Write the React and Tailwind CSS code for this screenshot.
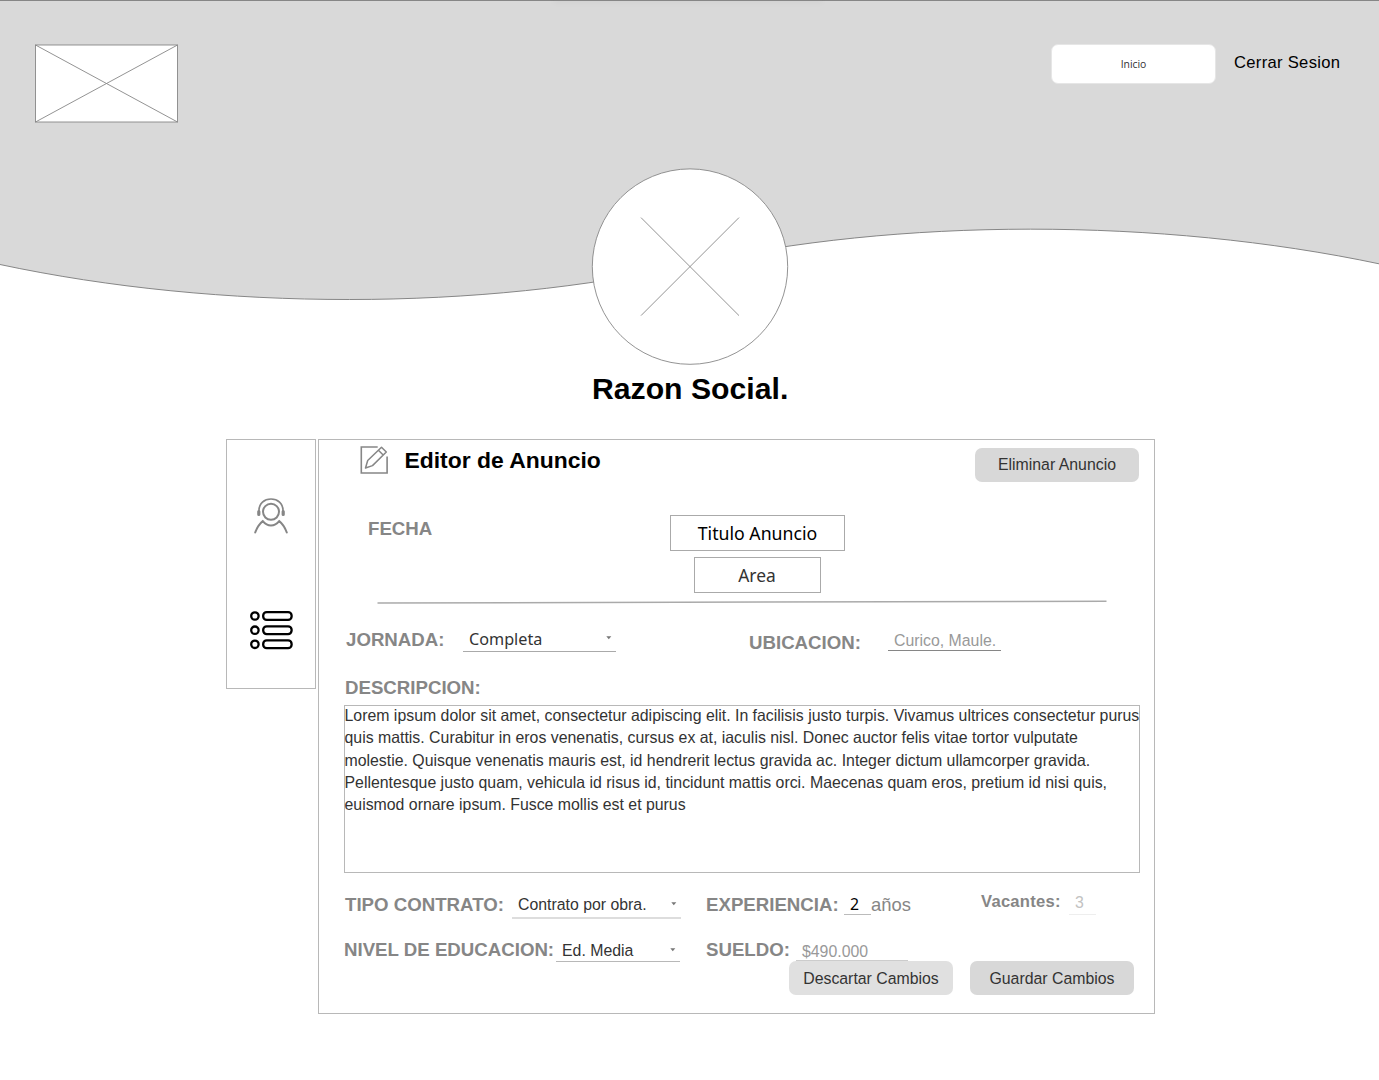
import React from "react";

const LOREM = [
  "Lorem ipsum dolor sit amet, consectetur adipiscing elit. In facilisis justo turpis. Vivamus ultrices consectetur purus",
  "quis mattis. Curabitur in eros venenatis, cursus ex at, iaculis nisl. Donec auctor felis vitae tortor vulputate",
  "molestie. Quisque venenatis mauris est, id hendrerit lectus gravida ac. Integer dictum ullamcorper gravida.",
  "Pellentesque justo quam, vehicula id risus id, tincidunt mattis orci. Maecenas quam eros, pretium id nisi quis,",
  "euismod ornare ipsum. Fusce mollis est et purus",
];

function Label({ className = "", children }) {
  return (
    <span className={`block shrink-0 whitespace-nowrap text-[18.67px] font-bold leading-[22px] text-[#868686] ${className}`}>
      {children}
    </span>
  );
}

function Button({ className = "", children }) {
  return (
    <button className={`block h-[34px] w-[164px] shrink-0 whitespace-nowrap rounded-[7px] text-center text-[15.85px] text-[#333] ${className}`}>
      {children}
    </button>
  );
}

function Field({ className = "", children }) {
  return <div className={`flex shrink-0 items-start whitespace-nowrap border-b text-[15.85px] leading-[22px] ${className}`}>{children}</div>;
}

function Caret({ className = "" }) {
  return (
    <svg className={`ml-auto shrink-0 ${className}`} width="6" height="4" viewBox="0 0 6 4">
      <path d="M0.3 0.3h5L2.8 3.3z" fill="#777" />
    </svg>
  );
}

function Logo() {
  return (
    <svg className="ml-[35px] mt-11" width="143" height="79" viewBox="0 0 143 79">
      <rect x="0.5" y="1" width="142" height="77" fill="#fff" stroke="#878787" strokeWidth="0.9" />
      <path d="M0.5 1L142.5 78M142.5 1L0.5 78" stroke="#878787" strokeWidth="0.9" />
    </svg>
  );
}

function Wave() {
  return (
    <svg className="absolute left-0 top-0" width="1379" height="310" viewBox="0 0 1379 310">
      <path
        d="M-1 0.5H1380V264C1160 217.5 898 217.5 690 264.3C482 311 220 311.5 -1 264.3Z"
        fill="#d9d9d9"
        stroke="#868686"
      />
    </svg>
  );
}

function Avatar() {
  return (
    <svg className="mx-auto block" width="198" height="198" viewBox="0 0 198 198">
      <circle cx="99" cy="98.6" r="97.7" fill="#fff" stroke="#878787" strokeWidth="0.9" />
      <path d="M50 49.6L148 147.6M148 49.6L50 147.6" stroke="#878787" strokeWidth="0.9" />
    </svg>
  );
}

function SupportIcon() {
  return (
    <svg width="36" height="38" viewBox="0 0 36 38" fill="none" stroke="#868686" strokeLinecap="round">
      <circle cx="18" cy="14.8" r="8" strokeWidth="2" />
      <path d="M6 13.5C6 6.2 11.3 2 18 2s12 4.2 12 11.5" strokeWidth="1.7" />
      <path d="M5.8 14.5v3M30.2 14.5v3" strokeWidth="3.2" />
      <path d="M2.2 35.5C4 30.5 6.6 26.6 9.8 24.1c4.8 5.9 11.6 5.9 16.4 0 3.2 2.5 5.8 6.4 7.6 11.4" strokeWidth="2" />
    </svg>
  );
}

function ListIcon() {
  return (
    <svg width="44" height="40" viewBox="0 0 44 40" fill="#fff" stroke="#000" strokeWidth="2.3">
      {[6, 20.2, 34.3].map((y) => (
        <g key={y}>
          <circle cx="5.9" cy={y} r="3.7" />
          <rect x="14.2" y={y - 3.9} width="28.4" height="7.8" rx="3.5" />
        </g>
      ))}
    </svg>
  );
}

function EditIcon() {
  return (
    <svg width="30" height="30" viewBox="0 0 30 30" fill="none" stroke="#868686">
      <path d="M18.7 2H2.3v26h25.8V11.5" strokeWidth="1.6" />
      <path d="M6.5 23l2.2-7.5L22.5 2.2l4.8 4.8L13.5 20.6zM19.4 5.2l4.8 4.8" strokeWidth="1.5" strokeLinejoin="round" />
    </svg>
  );
}

export default function App() {
  return (
    <main className="relative h-[1080px] w-[1379px] overflow-hidden bg-white font-['Liberation_Sans',Arial,sans-serif] text-black">
      <Wave />
      <div className="absolute left-[554px] top-0 h-px w-[268px] shadow-[0_0_6px_0_rgba(0,0,0,0.18)]" />

      <header className="relative flex h-[168px] items-start">
        <Logo />
        <button className="ml-auto mt-11 block h-10 w-[165px] rounded-[7px] border border-[#e6e6e6] bg-white text-center font-['Open_Sans',sans-serif] text-[10.4px] leading-[38px] text-[#333]">
          Inicio
        </button>
        <a className="ml-[18px] mr-[37px] mt-[52px] block w-[108px] whitespace-nowrap text-[16.6px] leading-[22px] tracking-[0.3px]">Cerrar Sesion</a>
      </header>

      <section className="relative h-[271px]">
        <Avatar />
        <h1 className="whitespace-nowrap pl-[592px] pt-[2px] text-[30.2px] font-bold leading-[42px]">Razon Social.</h1>
      </section>

      <div className="relative flex items-start gap-[2px] pl-[226px]">
        <nav className="flex h-[250px] w-[90px] flex-col items-center border border-[#b8b8b8] pt-[57px]">
          <SupportIcon />
          <div className="mt-[75px]">
            <ListIcon />
          </div>
        </nav>

        <section className="flex h-[575px] w-[837px] flex-col border border-[#b8b8b8]">
          <div className="flex h-[75px] items-start pl-10 pr-[15px]">
            <div className="mt-[5px]">
              <EditIcon />
            </div>
            <h2 className="ml-[15.5px] mt-[5px] whitespace-nowrap text-[22.9px] font-bold leading-[30px]">Editor de Anuncio</h2>
            <Button className="ml-auto mt-2 bg-[#d8d8d8] leading-[34px]">Eliminar Anuncio</Button>
          </div>

          <div className="flex h-[84px] items-start">
            <Label className="ml-[49px] mt-[3px] w-[302px]">FECHA</Label>
            <div className="flex w-[175px] flex-col items-center gap-[6px] font-['Noto_Sans',sans-serif]">
              <div className="h-9 w-[175px] border border-[#aaa] text-center text-[17.7px] leading-[35px]">Titulo Anuncio</div>
              <div className="mr-px h-9 w-[127px] border border-[#aaa] text-center text-[17.4px] leading-[35px] text-[#333]">Area</div>
            </div>
          </div>

          <svg className="ml-[58px] shrink-0" width="731" height="8" viewBox="0 0 731 8">
            <path d="M0.5 4L729.5 2.3" stroke="#aaa" strokeWidth="1.5" />
          </svg>

          <div className="flex h-[72px] items-start pt-[22px]">
            <Label className="ml-[27px] w-[117px]">JORNADA:</Label>
            <Field className="h-[23px] w-[153px] border-[#aaa] pl-[6px] pr-1 font-['Noto_Sans',sans-serif] text-[#333]">
              <span className="text-[16.2px] leading-5">Completa</span>
              <Caret className="mt-[7px]" />
            </Field>
            <Label className="ml-[133px] mt-[3px] w-[139px]">UBICACION:</Label>
            <Field className="mt-[1px] h-[21px] w-[113px] border-[#868686] pl-[6px] text-[#999]">Curico, Maule.</Field>
          </div>

          <Label className="ml-[26px] mt-[-2px] h-[28px]">DESCRIPCION:</Label>

          <div className="ml-[25px] h-[168px] w-[796px] shrink-0 whitespace-nowrap border border-[#b8b8b8] text-[15.86px] leading-[22.25px] text-[#333]">
            <div className="mt-[-1px] ml-[-0.5px]">
              {LOREM.map((line) => (
                <p key={line}>{line}</p>
              ))}
            </div>
          </div>

          <div className="flex h-[46px] items-start pt-[21px]">
            <Label className="ml-[26px] w-[167px]">TIPO CONTRATO:</Label>
            <Field className="h-[25px] w-[169px] border-b-2 border-[#ddd] pl-[6px] pr-1 text-[#333]">
              <span>Contrato por obra.</span>
              <Caret className="mt-2" />
            </Field>
            <Label className="ml-[25px] w-[138px]">EXPERIENCIA:</Label>
            <Field className="h-[21px] w-[27px] border-[#bbb] pl-[6px] text-black">
              <span className="font-['Noto_Sans',sans-serif] leading-5">2</span>
            </Field>
            <span className="block w-[110px] text-[18.4px] leading-[22px] text-[#868686]">años</span>
            <span className="mt-[-3px] block w-[88px] text-[16.6px] font-bold leading-[22px] tracking-[0.25px] text-[#868686]">Vacantes:</span>
            <Field className="mt-[-2px] h-[23px] w-[27px] border-[#eee] pl-[6px] text-[#c2c2c2]">3</Field>
          </div>

          <div className="flex h-[42px] items-start pt-5">
            <Label className="ml-[25px] w-[212px]">NIVEL DE EDUCACION:</Label>
            <Field className="mt-[1px] h-[22px] w-[124px] border-[#b8b8b8] pl-[6px] pr-1 text-[#333]">
              <span>Ed. Media</span>
              <Caret className="mt-2" />
            </Field>
            <Label className="ml-[26px] w-[90px]">SUELDO:</Label>
            <Field className="mt-[2px] h-[20px] w-[112px] border-[#ccc] pl-[6px] text-[#999]">$490.000</Field>
          </div>

          <div className="flex gap-[17px] pl-[470px]">
            <Button className="bg-[#e0e0e0] leading-[36px]">Descartar Cambios</Button>
            <Button className="bg-[#d8d8d8] leading-[36px]">Guardar Cambios</Button>
          </div>
        </section>
      </div>
    </main>
  );
}
